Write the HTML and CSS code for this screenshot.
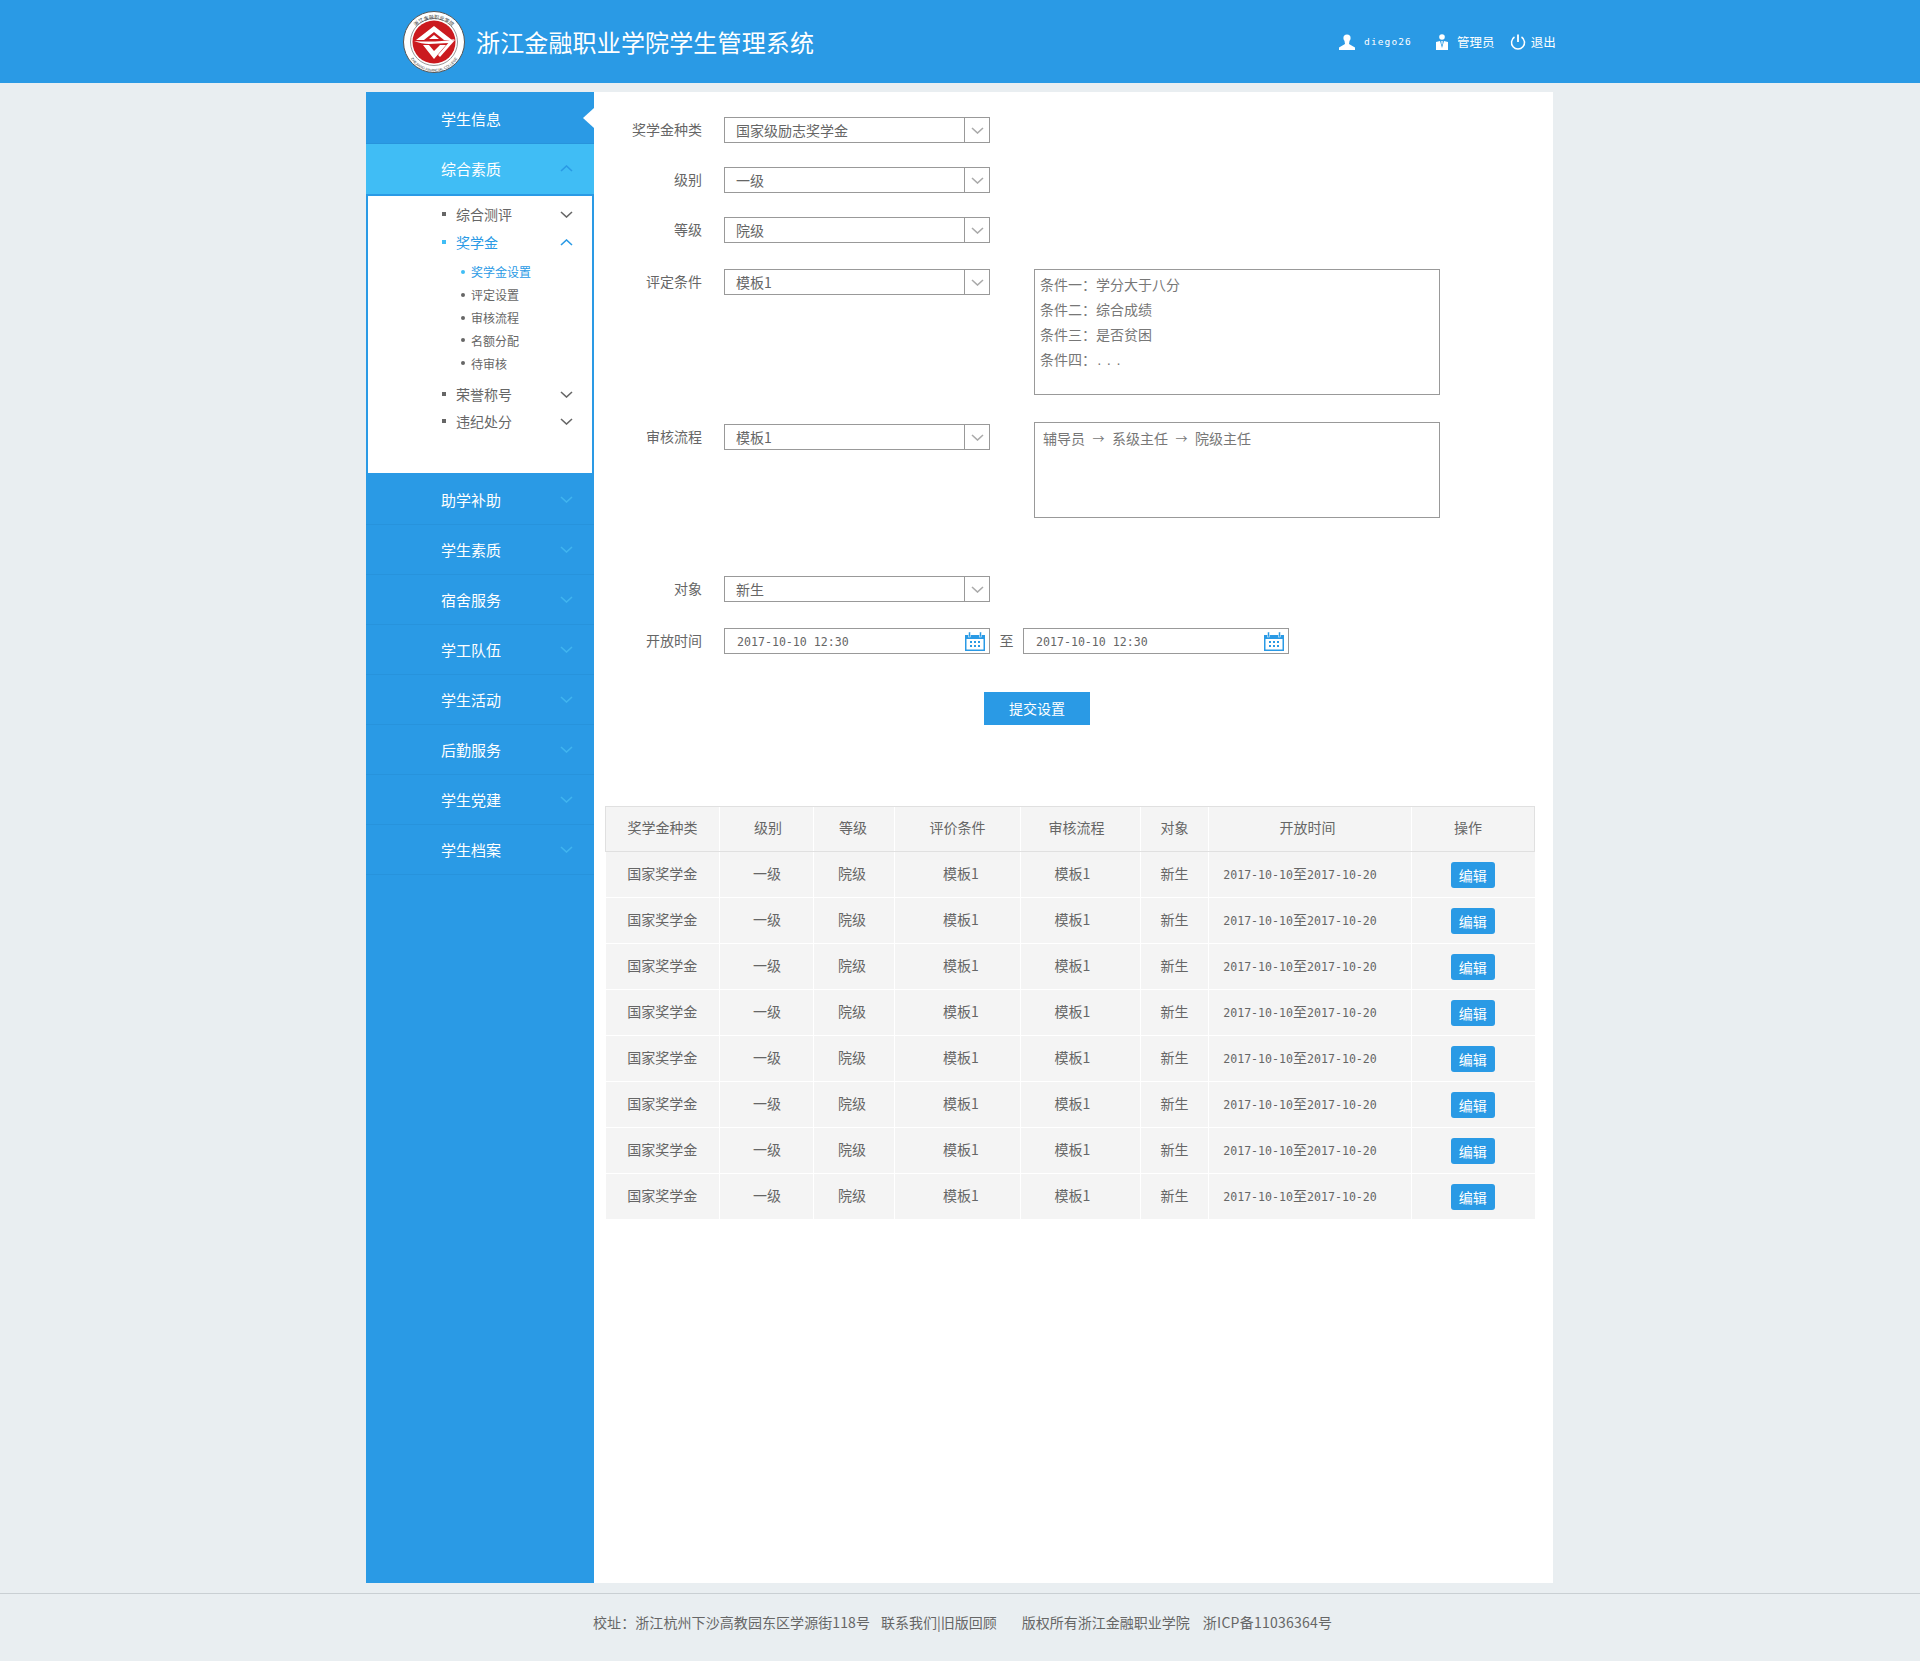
FILE: index.html
```html
<!DOCTYPE html>
<html lang="zh-CN">
<head>
<meta charset="utf-8">
<title>浙江金融职业学院学生管理系统</title>
<link rel="stylesheet" href="styles.css">
</head>
<body>
<svg class="defs" width="0" height="0" aria-hidden="true">
  <symbol id="down" viewBox="0 0 13 7"><polyline points="1,1 6.5,6 12,1" fill="none" stroke="currentColor" stroke-width="1.6"/></symbol>
  <symbol id="up" viewBox="0 0 13 7"><polyline points="1,6 6.5,1 12,6" fill="none" stroke="currentColor" stroke-width="1.6"/></symbol>
  <symbol id="cal" viewBox="0 0 20 19">
    <rect x="0" y="3" width="20" height="16" fill="#2a9ae5"/>
    <rect x="1.5" y="7" width="17" height="10.500" fill="#fff"/>
    <rect x="3.500" y="0" width="2" height="5" fill="#2a9ae5" stroke="#fff" stroke-width=".5"/>
    <rect x="14.500" y="0" width="2" height="5" fill="#2a9ae5" stroke="#fff" stroke-width=".5"/>
    <g fill="#2a9ae5"><rect x="5" y="9" width="2" height="2"/><rect x="9" y="9" width="2" height="2"/><rect x="13" y="9" width="2" height="2"/><rect x="5" y="13" width="2" height="2"/><rect x="9" y="13" width="2" height="2"/><rect x="13" y="13" width="2" height="2"/></g>
  </symbol>
</svg>

<header class="topbar">
  <svg class="logo" viewBox="0 0 64 64" width="64" height="64">
    <defs>
      <path id="ring-top" d="M7 34 A25 25 0 0 1 57 34"/>
      <path id="ring-bot" d="M4.500 34 A27.500 27.500 0 0 0 59.500 34"/>
    </defs>
    <circle cx="32" cy="32" r="30.500" fill="#fff" stroke="#555" stroke-width="1"/>
    <circle cx="32" cy="32" r="23.500" fill="#fff" stroke="#999" stroke-width="1"/>
    <circle cx="32" cy="32" r="21.500" fill="#cb1a1f"/>
    <text class="logo-cn"><textPath href="#ring-top" startOffset="50%" text-anchor="middle">浙江金融职业学院</textPath></text>
    <text class="logo-en"><textPath href="#ring-bot" startOffset="50%" text-anchor="middle">ZHEJIANG FINANCIAL COLLEGE</textPath></text>
    <path d="M32 16 L50 30 L42 30 L32 22 L22 30 L14 30 Z" fill="#fff"/>
    <path d="M12 31 C24 32 40 32 53 29 L47 33 L27 34 C22 34 17 33 12 31 Z" fill="#fff"/>
    <path d="M21 35 L27 35 L32 41 L38 35 L44 35 L32 49 Z" fill="#fff"/>
    <path d="M53 30 L38 47 L36 45 L48 31 Z" fill="#fff"/>
    <path d="M32 25 L37 29 L27 29 Z" fill="#fff"/>
  </svg>
  <h1 class="site-title">浙江金融职业学院学生管理系统</h1>
  <div class="userbar">
    <svg class="ub-icon-user" viewBox="0 0 16 16" width="16" height="16"><circle cx="8" cy="4" r="3.600" fill="#fff"/><path d="M5.500 7 L6 10 L0 13.500 V16 H16 V13.500 L10 10 L10.500 7 Z" fill="#fff"/></svg>
    <span class="ub-name">diego26</span>
    <svg class="ub-icon-admin" viewBox="0 0 12 16" width="12" height="16"><circle cx="6" cy="3" r="2.800" fill="#fff"/><path d="M0 8 L4 7 L6 14 L8 7 L12 8 V16 H0 Z" fill="#fff"/><path d="M5.300 7 H6.700 L6.500 10 L6 11 L5.500 10 Z" fill="#fff"/></svg>
    <span class="ub-text">管理员</span>
    <svg class="ub-icon-power" viewBox="0 0 16 16" width="16" height="16"><path d="M4.500 3 A6.500 6.500 0 1 0 11.500 3" fill="none" stroke="#fff" stroke-width="1.500"/><line x1="8" y1="0.500" x2="8" y2="8" stroke="#fff" stroke-width="1.800"/></svg>
    <span class="ub-text ub-exit">退出</span>
  </div>
</header>

<div class="shell">
  <nav class="sidebar">
    <div class="nav-item nav-first">学生信息<i class="notch"></i></div>
    <div class="nav-item nav-open">综合素质<svg class="chev chev-open"><use href="#up"/></svg></div>
    <div class="panel">
      <div class="p-item"><span class="p-label"><i class="sq"></i>综合测评</span><svg class="chev"><use href="#down"/></svg></div>
      <div class="p-item p-on"><span class="p-label"><i class="sq"></i>奖学金</span><svg class="chev"><use href="#up"/></svg></div>
      <ul class="sub">
        <li class="sub-on">奖学金设置</li>
        <li>评定设置</li>
        <li>审核流程</li>
        <li>名额分配</li>
        <li>待审核</li>
      </ul>
      <div class="p-item"><span class="p-label"><i class="sq"></i>荣誉称号</span><svg class="chev"><use href="#down"/></svg></div>
      <div class="p-item"><span class="p-label"><i class="sq"></i>违纪处分</span><svg class="chev"><use href="#down"/></svg></div>
    </div>
    <div class="nav-item">助学补助<svg class="chev chev-light"><use href="#down"/></svg></div>
    <div class="nav-item">学生素质<svg class="chev chev-light"><use href="#down"/></svg></div>
    <div class="nav-item">宿舍服务<svg class="chev chev-light"><use href="#down"/></svg></div>
    <div class="nav-item">学工队伍<svg class="chev chev-light"><use href="#down"/></svg></div>
    <div class="nav-item">学生活动<svg class="chev chev-light"><use href="#down"/></svg></div>
    <div class="nav-item">后勤服务<svg class="chev chev-light"><use href="#down"/></svg></div>
    <div class="nav-item">学生党建<svg class="chev chev-light"><use href="#down"/></svg></div>
    <div class="nav-item">学生档案<svg class="chev chev-light"><use href="#down"/></svg></div>
  </nav>

  <main class="main">
    <form class="form">
      <div class="row r1">
        <label class="lbl">奖学金种类</label>
        <div class="sel"><span class="sel-val">国家级励志奖学金</span><span class="sel-btn"><svg class="chev"><use href="#down"/></svg></span></div>
      </div>
      <div class="row r1">
        <label class="lbl">级别</label>
        <div class="sel"><span class="sel-val">一级</span><span class="sel-btn"><svg class="chev"><use href="#down"/></svg></span></div>
      </div>
      <div class="row r2">
        <label class="lbl">等级</label>
        <div class="sel"><span class="sel-val">院级</span><span class="sel-btn"><svg class="chev"><use href="#down"/></svg></span></div>
      </div>
      <div class="row r3">
        <label class="lbl">评定条件</label>
        <div class="sel"><span class="sel-val">模板1</span><span class="sel-btn"><svg class="chev"><use href="#down"/></svg></span></div>
        <div class="box box-cond">
          <p>条件一：学分大于八分</p>
          <p>条件二：综合成绩</p>
          <p>条件三：是否贫困</p>
          <p>条件四：<span class="dots">...</span></p>
        </div>
      </div>
      <div class="row r4">
        <label class="lbl">审核流程</label>
        <div class="sel"><span class="sel-val">模板1</span><span class="sel-btn"><svg class="chev"><use href="#down"/></svg></span></div>
        <div class="box box-flow">辅导员<span class="arrow">→</span>系级主任<span class="arrow">→</span>院级主任</div>
      </div>
      <div class="row r2">
        <label class="lbl">对象</label>
        <div class="sel"><span class="sel-val">新生</span><span class="sel-btn"><svg class="chev"><use href="#down"/></svg></span></div>
      </div>
      <div class="row r5">
        <label class="lbl">开放时间</label>
        <div class="date"><span class="date-val">2017-10-10 12:30</span><svg class="cal"><use href="#cal"/></svg></div>
        <span class="to">至</span>
        <div class="date"><span class="date-val">2017-10-10 12:30</span><svg class="cal"><use href="#cal"/></svg></div>
      </div>
      <div class="submit-row"><button type="button" class="submit">提交设置</button></div>
    </form>

    <table class="grid">
      <thead>
        <tr><th class="c1">奖学金种类</th><th class="c2">级别</th><th class="c3">等级</th><th class="c4">评价条件</th><th class="c5">审核流程</th><th class="c6">对象</th><th class="c7">开放时间</th><th class="c8">操作</th></tr>
      </thead>
      <tbody>
        <tr><td>国家奖学金</td><td class="td-one">一级</td><td class="td-lvl">院级</td><td class="td-tpl">模板1</td><td class="td-flow">模板1</td><td>新生</td><td class="td-date">2017-10-10<b>至</b>2017-10-20</td><td class="td-op"><span class="edit">编辑</span></td></tr>
        <tr><td>国家奖学金</td><td class="td-one">一级</td><td class="td-lvl">院级</td><td class="td-tpl">模板1</td><td class="td-flow">模板1</td><td>新生</td><td class="td-date">2017-10-10<b>至</b>2017-10-20</td><td class="td-op"><span class="edit">编辑</span></td></tr>
        <tr><td>国家奖学金</td><td class="td-one">一级</td><td class="td-lvl">院级</td><td class="td-tpl">模板1</td><td class="td-flow">模板1</td><td>新生</td><td class="td-date">2017-10-10<b>至</b>2017-10-20</td><td class="td-op"><span class="edit">编辑</span></td></tr>
        <tr><td>国家奖学金</td><td class="td-one">一级</td><td class="td-lvl">院级</td><td class="td-tpl">模板1</td><td class="td-flow">模板1</td><td>新生</td><td class="td-date">2017-10-10<b>至</b>2017-10-20</td><td class="td-op"><span class="edit">编辑</span></td></tr>
        <tr><td>国家奖学金</td><td class="td-one">一级</td><td class="td-lvl">院级</td><td class="td-tpl">模板1</td><td class="td-flow">模板1</td><td>新生</td><td class="td-date">2017-10-10<b>至</b>2017-10-20</td><td class="td-op"><span class="edit">编辑</span></td></tr>
        <tr><td>国家奖学金</td><td class="td-one">一级</td><td class="td-lvl">院级</td><td class="td-tpl">模板1</td><td class="td-flow">模板1</td><td>新生</td><td class="td-date">2017-10-10<b>至</b>2017-10-20</td><td class="td-op"><span class="edit">编辑</span></td></tr>
        <tr><td>国家奖学金</td><td class="td-one">一级</td><td class="td-lvl">院级</td><td class="td-tpl">模板1</td><td class="td-flow">模板1</td><td>新生</td><td class="td-date">2017-10-10<b>至</b>2017-10-20</td><td class="td-op"><span class="edit">编辑</span></td></tr>
        <tr><td>国家奖学金</td><td class="td-one">一级</td><td class="td-lvl">院级</td><td class="td-tpl">模板1</td><td class="td-flow">模板1</td><td>新生</td><td class="td-date">2017-10-10<b>至</b>2017-10-20</td><td class="td-op"><span class="edit">编辑</span></td></tr>
      </tbody>
    </table>
  </main>
</div>

<footer class="footer">
  <span class="f-0">校址：浙江杭州下沙高教园东区学源街118号</span>
  <span class="f-a">联系我们|旧版回顾</span>
  <span class="f-b">版权所有浙江金融职业学院</span>
  <span class="f-c">浙ICP备11036364号</span>
</footer>
</body>
</html>
```

FILE: styles.css
```css
* { box-sizing: border-box; }
html, body { margin: 0; padding: 0; }
body {
  height: 1661px;
  overflow: hidden;
  background: #e9eef1;
  color: #666;
  font-family: "Noto Sans CJK SC", "Liberation Sans", sans-serif;
  font-size: 14px;
}
.defs { position: absolute; }

/* Top bar */
.topbar {
  height: 83px;
  background: #2a9ae5;
  display: flex;
  align-items: center;
  padding-left: 402px;
  color: #fff;
}
.logo { flex: none; }
.logo-cn { font-size: 5px; fill: #333; }
.logo-en { font-size: 3.6px; fill: #333; font-family: "Liberation Sans", sans-serif; }
.site-title {
  margin: 0 0 0 10px;
  font-size: 24px;
  font-weight: 400;
  letter-spacing: .15px;
  line-height: 30px;
  white-space: nowrap;
}
.userbar {
  display: flex;
  align-items: center;
  margin-left: 525px;
}
.ub-icon-user, .ub-icon-admin, .ub-icon-power { flex: none; }
.ub-name {
  width: 48px;
  margin-left: 9px;
  font-family: "DejaVu Sans Mono", monospace;
  font-size: 9.500px;
  letter-spacing: 1.100px;
}
.ub-icon-admin { margin-left: 24px; }
.ub-text { margin-left: 9px; font-size: 12.500px; }
.ub-icon-power { margin-left: 15px; }
.ub-exit { margin-left: 5px; }

/* Shell */
.shell {
  display: flex;
  width: 1187px;
  height: 1491px;
  margin: 9px 0 0 366px;
}
.sidebar {
  flex: none;
  width: 228px;
  background: #2a9ae5;
}
.nav-item {
  position: relative;
  display: flex;
  align-items: center;
  justify-content: space-between;
  height: 50px;
  padding: 0 21px 1px 75px;
  border-bottom: 1px solid #2793dc;
  color: #fff;
  font-size: 15px;
}
.nav-first { height: 52px; padding: 2px 21px 0 75px; }
.nav-open { height: 50px; background: #40bdf5; border-bottom: 0; padding: 0 21px 2px 75px; }
.notch {
  position: absolute;
  right: 0;
  top: 16px;
  border: 10px solid transparent;
  border-left: 0;
  border-right: 11px solid #fff;
}
.chev { flex: none; width: 13px; height: 7px; color: #666; }
.chev-open { color: #2a9ae5; }
.chev-light { color: #40b4ef; }

/* Expanded panel */
.panel {
  height: 281px;
  padding-top: 4.600px;
  background: #fff;
  border: 2px solid #2a9ae5;
}
.p-item {
  display: flex;
  align-items: center;
  justify-content: space-between;
  height: 28px;
  padding: 0 19px 0 74px;
  color: #666;
}
.p-item:last-child { height: 26px; }
.p-label { display: flex; align-items: center; padding-bottom: 2px; }
.sq { width: 4px; height: 4px; margin-right: 10px; background: #666; }
.p-on { color: #2a9ae5; }
.p-on .chev { color: #2a9ae5; }
.p-on .sq { background: #40bdf5; }
.sub { margin: 4px 0 6.400px; padding: 0 0 0 93px; list-style: none; }
.sub li {
  display: flex;
  align-items: center;
  height: 22.800px;
  font-size: 12px;
  color: #666;
}
.sub li::before {
  content: "";
  width: 4px;
  height: 4px;
  margin-right: 6px;
  border-radius: 50%;
  background: #666;
}
.sub .sub-on { color: #2a9ae5; }
.sub .sub-on::before { background: #40bdf5; }

/* Main */
.main { flex: 1; background: #fff; padding-top: 25px; }
.row { display: flex; align-items: flex-start; }
.r1 { margin-bottom: 24px; }
.r2 { margin-bottom: 26px; }
.r3 { height: 126px; margin-bottom: 27px; }
.r4 { height: 96px; margin-bottom: 58px; }
.r4 .lbl, .r4 .sel { margin-top: 2px; }
.r5 { margin-bottom: 38px; }
.lbl {
  flex: none;
  width: 108px;
  margin-right: 22px;
  line-height: 25px;
  text-align: right;
  color: #666;
}
.sel {
  flex: none;
  display: flex;
  width: 266px;
  height: 26px;
  border: 1px solid #999;
}
.sel-val { flex: 1; padding-left: 11px; line-height: 25px; color: #666; }
.sel-btn {
  flex: none;
  display: flex;
  align-items: center;
  justify-content: center;
  width: 25px;
  border-left: 1px solid #999;
}
.sel-btn .chev { color: #aaa; }
.box {
  flex: none;
  width: 406px;
  margin-left: 44px;
  border: 1px solid #999;
  color: #777;
}
.box p { margin: 0; line-height: 25px; }
.box-cond { height: 126px; padding: 2px 5px; }
.box-flow { height: 96px; padding: 3px 8px; line-height: 25px; }
.arrow { margin: 0 7.500px; font-size: 12px; }
.dots { letter-spacing: 3px; font-family: "DejaVu Sans Mono", monospace; font-size: 11px; }
.date {
  flex: none;
  display: flex;
  align-items: center;
  justify-content: space-between;
  width: 266px;
  height: 26px;
  padding: 0 4px 0 12px;
  border: 1px solid #999;
}
.date-val { padding-top: 1px; font-family: "DejaVu Sans Mono", monospace; font-size: 11.600px; color: #666; }
.cal { flex: none; width: 20px; height: 19px; margin-top: 1px; }
.to { flex: none; width: 33px; line-height: 25px; text-align: center; }
.submit-row { padding-left: 390px; }
.submit {
  display: block;
  width: 106px;
  height: 33px;
  padding: 0 0 2px;
  border: 0;
  background: #2a9ae5;
  color: #fff;
  font-family: inherit;
  font-size: 14px;
}

/* Table */
.grid {
  width: 929px;
  margin: 81px 0 0 11px;
  border-collapse: collapse;
  table-layout: fixed;
}
.grid th, .grid td {
  padding: 0 0 3px;
  background: #f4f4f4;
  text-align: center;
  font-weight: 400;
  color: #666;
}
.grid th {
  height: 45px;
  padding-bottom: 5px;
  border-top: 1px solid #e0e0e0;
  border-bottom: 1px solid #e0e0e0;
  border-left: 1px solid #fff;
}
.grid th:first-child { border-left: 1px solid #e0e0e0; }
.grid th:last-child { border-right: 1px solid #e0e0e0; padding-right: 10px; }
.grid td {
  height: 46px;
  border-left: 1px solid #fff;
  border-bottom: 1px solid #fff;
}
.grid td:first-child { border-left: 0; }
.c1 { width: 114px; }
.c2 { width: 94px; }
.c3 { width: 81px; }
.c4 { width: 126px; }
.c5 { width: 120px; }
.c6 { width: 68px; }
.c7 { width: 203px; }
.c8 { width: 123px; }
.grid .c2 { padding-left: 3px; }
.grid .c3 { padding-right: 2px; }
.grid .c5 { padding-right: 8px; }
.grid .c7 { padding-right: 5px; }
.grid .td-one { padding-left: 1px; }
.grid .td-lvl { padding-right: 4px; }
.grid .td-tpl { padding-left: 7px; }
.grid .td-flow { padding-right: 16px; }
.grid .td-date {
  padding-right: 20px;
  font-family: "DejaVu Sans Mono", monospace;
  font-size: 11.600px;
}
.grid .td-op { padding: 0 1px 0 0; }
.td-date b { font-family: "Noto Sans CJK SC", sans-serif; font-size: 14px; font-weight: 400; }
.edit {
  display: inline-block;
  width: 44px;
  height: 26px;
  border-radius: 3px;
  background: #2a9ae5;
  color: #fff;
  line-height: 26px;
  vertical-align: middle;
}

/* Footer */
.footer {
  display: flex;
  height: 68px;
  margin-top: 10px;
  padding: 16px 0 0 593px;
  border-top: 1px solid #c9cfd3;
  line-height: 24px;
  color: #666;
  white-space: nowrap;
}
.f-0 { letter-spacing: .08px; }
.f-a { margin-left: 11px; }
.f-b { margin-left: 25px; }
.f-c { margin-left: 13px; letter-spacing: .25px; }
```
